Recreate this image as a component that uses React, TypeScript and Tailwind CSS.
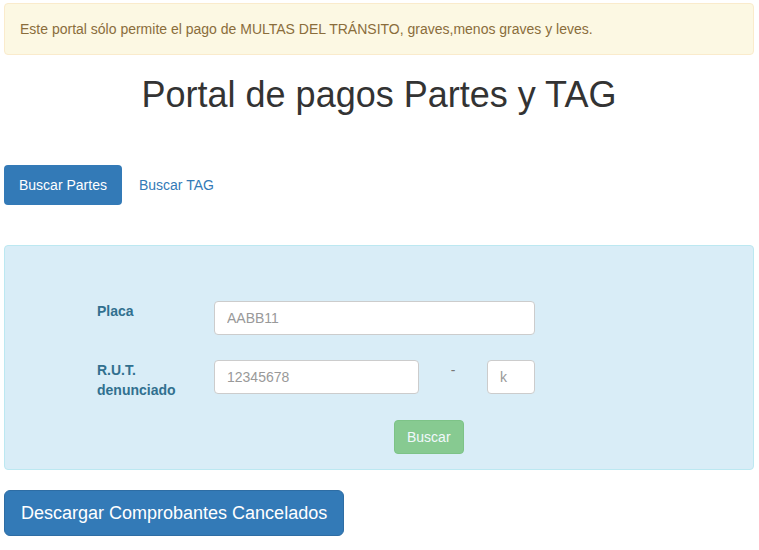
import { useState } from "react";

export default function App() {
  const [tab, setTab] = useState<"partes" | "tag">("partes");
  const [placa, setPlaca] = useState("");
  const [rut, setRut] = useState("");
  const [dv, setDv] = useState("");

  const canSearch = placa.trim() !== "" && rut.trim() !== "" && dv.trim() !== "";

  return (
    <div
      className="min-h-[550px] bg-white pl-[4px] pr-[5px] pt-[3px] text-[14px] leading-[20px] text-[#333]"
      style={{ fontFamily: '"Liberation Sans", Arial, Helvetica, sans-serif' }}
    >
      <div className="rounded-[4px] border border-[#faebcc] bg-[#fcf8e3] px-[15px] py-[15px] text-[#8a6d3b]">
        Este portal sólo permite el pago de MULTAS DEL TRÁNSITO, graves,menos graves y leves.
      </div>

      <h1 className="mt-[20px] text-center text-[36px] font-normal leading-[39.6px] text-[#333]">
        Portal de pagos Partes y TAG
      </h1>

      <ul className="mt-[50px] flex gap-[2px]">
        <li>
          <button
            type="button"
            onClick={() => setTab("partes")}
            className={
              tab === "partes"
                ? "rounded-[4px] bg-[#337ab7] px-[15px] py-[10px] text-white"
                : "rounded-[4px] px-[15px] py-[10px] text-[#337ab7] hover:bg-[#eee]"
            }
          >
            Buscar Partes
          </button>
        </li>
        <li>
          <button
            type="button"
            onClick={() => setTab("tag")}
            className={
              tab === "tag"
                ? "rounded-[4px] bg-[#337ab7] px-[15px] py-[10px] text-white"
                : "rounded-[4px] px-[15px] py-[10px] text-[#337ab7] hover:bg-[#eee]"
            }
          >
            Buscar TAG
          </button>
        </li>
      </ul>

      <form
        onSubmit={(e) => e.preventDefault()}
        className="mt-[40px] h-[225px] rounded-[4px] border border-[#bce8f1] bg-[#d9edf7] pt-[55px] pl-[92px]"
      >
        <div className="flex">
          <label className="w-[117px] font-bold text-[#31708f]">Placa</label>
          <input
            value={placa}
            onChange={(e) => setPlaca(e.target.value)}
            placeholder="AABB11"
            className="h-[34px] w-[321px] rounded-[4px] border border-[#ccc] bg-white px-[12px] text-[#555] placeholder:text-[#999] focus:outline-none"
          />
        </div>

        <div className="mt-[25px] flex">
          <label className="w-[117px] font-bold text-[#31708f]">
            R.U.T.
            <br />
            denunciado
          </label>
          <input
            value={rut}
            onChange={(e) => setRut(e.target.value)}
            placeholder="12345678"
            className="h-[34px] w-[205px] rounded-[4px] border border-[#ccc] bg-white px-[12px] text-[#555] placeholder:text-[#999] focus:outline-none"
          />
          <span className="w-[68px] text-center text-[#777]">-</span>
          <input
            value={dv}
            onChange={(e) => setDv(e.target.value)}
            maxLength={1}
            placeholder="k"
            className="h-[34px] w-[48px] rounded-[4px] border border-[#ccc] bg-white px-[12px] text-[#555] placeholder:text-[#999] focus:outline-none"
          />
        </div>

        <div className="mt-[20px] pl-[297px]">
          <button
            type="submit"
            disabled={!canSearch}
            className="h-[34px] rounded-[4px] border border-[#4cae4c] bg-[#5cb85c] px-[12px] text-white disabled:opacity-65"
          >
            Buscar
          </button>
        </div>
      </form>

      <button
        type="button"
        className="mt-[20px] rounded-[6px] border border-[#2e6da4] bg-[#337ab7] px-[16px] py-[10px] text-[18px] leading-[24px] text-white"
      >
        Descargar Comprobantes Cancelados
      </button>
    </div>
  );
}
